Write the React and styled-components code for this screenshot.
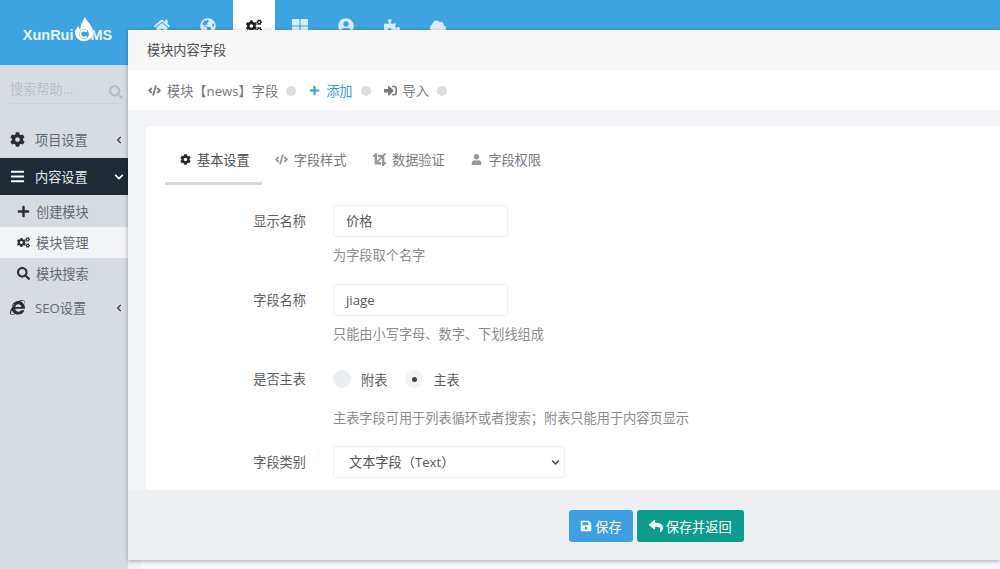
import React from 'react';
import styled, { createGlobalStyle } from 'styled-components';
import {
  FaHome, FaCog, FaCogs, FaBars, FaPlus, FaSearch, FaInternetExplorer, FaChevronLeft, FaChevronDown,
  FaThLarge, FaUserCircle, FaPuzzlePiece, FaCloud, FaCode, FaSignInAlt, FaCrop, FaUser, FaSave, FaReply, FaGlobeAmericas,
} from 'react-icons/fa';

const GlobalStyle = createGlobalStyle`
  html, body { margin: 0; padding: 0; height: 100%; overflow: hidden; }
  body {
    background: #eef1f5;
    font-family: "Open Sans", "Noto Sans CJK SC", sans-serif;
    font-size: 13.2px;
    color: #555;
  }
`;

const Page = styled.div`
  position: relative;
  width: 1000px;
  height: 569px;
  overflow: hidden;
`;

const TopBar = styled.header`
  display: flex;
  height: 65px;
  background: #3ea4e1;
`;

const Brand = styled.div`
  width: 128px;
  height: 65px;
  display: flex;
  align-items: center;
  justify-content: center;
`;

const BrandText = styled.span`
  display: flex;
  align-items: center;
  color: #eaf5fc;
  font-family: "Liberation Sans", sans-serif;
  font-weight: 700;
  font-size: 14.5px;
  margin: 4px 0 0 7px;
`;

const FlameMark = styled.svg`
  width: 20px;
  height: 27px;
  margin: -9px -3px 0 0;
`;

const TopNav = styled.nav`
  display: flex;
  margin-left: 11px;
`;

const TopItem = styled.div`
  width: 42px;
  height: 65px;
  margin: 0 2px;
  display: flex;
  justify-content: center;
  padding-top: 18px;
  box-sizing: border-box;
  font-size: 16px;
  color: ${p => (p.$active ? '#222' : '#d9edf9')};
  background: ${p => (p.$active ? '#fff' : 'transparent')};
`;

const Body = styled.div`
  display: flex;
  height: 504px;
`;

const Sidebar = styled.aside`
  width: 128px;
  background: #d7dce3;
`;

const SearchBox = styled.div`
  display: flex;
  align-items: center;
  justify-content: space-between;
  height: 39px;
  margin: 0 5px 0 10px;
  padding-top: 9px;
  box-sizing: border-box;
  border-bottom: 1px solid #ced3da;
  color: #b9bec6;
`;

const SearchGlyph = styled.span`
  display: flex;
  font-size: 14px;
  margin: 6px 0 0 0;
`;

const MenuList = styled.div`
  margin-top: 17px;
`;

const SubMenu = styled.div`
  padding-top: 1px;
`;

const MenuRow = styled.div`
  display: flex;
  align-items: center;
  height: ${p => (p.$sub ? 31 : 37)}px;
  background: ${p => (p.$dark ? '#1f2a36' : p.$light ? '#f3f4f6' : 'transparent')};
  color: ${p => (p.$dark ? '#e8eaec' : '#62686f')};
`;

const MenuIcon = styled.span`
  width: ${p => (p.$sub ? 36 : 35)}px;
  padding-left: ${p => (p.$sub ? 17 : 10)}px;
  box-sizing: border-box;
  display: flex;
  font-size: ${p => (p.$sub ? 13 : 15)}px;
  color: ${p => (p.$dark ? '#fff' : '#2a2e33')};
`;

const MenuLabel = styled.span`
  flex: 1;
`;

const MenuArrow = styled.span`
  width: ${p => (p.$dark ? 14 : 13)}px;
  display: flex;
  font-size: ${p => (p.$dark ? 10 : 8)}px;
  color: ${p => (p.$dark ? '#fff' : '#333')};
`;

const Backdrop = styled.main`
  flex: 1;
  background: #f8f9fb;
  margin-left: 13px;
`;

const Modal = styled.section`
  position: absolute;
  left: 128px;
  top: 30px;
  right: 0;
  height: 530px;
  background: #eef1f5;
  box-shadow: 0 1px 4px rgba(0, 0, 0, 0.35);
  display: flex;
  flex-direction: column;
`;

const ModalTitle = styled.div`
  height: 40px;
  display: flex;
  align-items: center;
  padding: 0 0 1px 19px;
  box-sizing: border-box;
  background: #f7f7f7;
  color: #4c4f53;
`;

const Breadcrumb = styled.div`
  height: 40px;
  display: flex;
  align-items: center;
  padding: 1px 0 0 20px;
  box-sizing: border-box;
  background: #fff;
  color: #76797d;
`;

const CrumbItem = styled.span`
  display: flex;
  align-items: center;
  gap: 6px;
  color: ${p => (p.$blue ? '#3b9ad8' : 'inherit')};
`;

const CrumbDot = styled.i`
  width: 10px;
  height: 10px;
  border-radius: 50%;
  background: #dcdde0;
  margin: 0 13px 0 8px;
`;

const Content = styled.div`
  flex: 1;
  padding: 16px 0 0 18px;
  background: #f4f5f9;
`;

const Card = styled.div`
  height: 364px;
  background: #fff;
  border-radius: 3px 0 0 3px;
  overflow: hidden;
`;

const Tabs = styled.div`
  display: flex;
  margin-left: 19px;
  height: 59px;
`;

const Tab = styled.div`
  display: flex;
  align-items: center;
  gap: 6px;
  height: 59px;
  box-sizing: border-box;
  padding: 11px ${p => (p.$active ? 12 : 13)}px 0 ${p => (p.$active ? 15 : 13)}px;
  margin-right: ${p => (p.$active ? 0 : 0.5)}px;
  color: ${p => (p.$active ? '#4a4d52' : '#777a7f')};
  border-bottom: 3px solid ${p => (p.$active ? '#d8d8d8' : 'transparent')};
`;

const TabIcon = styled.span`
  display: flex;
  font-size: ${p => p.$size || 11}px;
  color: ${p => (p.$active ? '#26292d' : '#95989c')};
`;

const Form = styled.div`
  padding-top: 20px;
`;

const FormRow = styled.div`
  display: flex;
  align-items: flex-start;
  height: ${p => p.$h}px;
`;

const Label = styled.label`
  width: 187px;
  padding-right: 27px;
  box-sizing: border-box;
  text-align: right;
  color: #5b5e62;
  line-height: 32px;
`;

const Field = styled.div`
  display: flex;
  flex-direction: column;
`;

const TextBox = styled.div`
  width: 175px;
  height: 32px;
  box-sizing: border-box;
  padding: 0 12px;
  line-height: 30px;
  border: 1px solid #eef0f3;
  border-radius: 3px;
  color: #555;
`;

const SelectBox = styled(TextBox)`
  width: 232px;
  display: flex;
  align-items: center;
  justify-content: space-between;
  padding: 0 4px 0 15px;
`;

const Help = styled.div`
  margin-top: ${p => p.$gap || 9}px;
  line-height: 18px;
  color: #888b8f;
`;

const RadioGroup = styled.div`
  display: flex;
  align-items: center;
  height: 32px;
`;

const RadioMark = styled.span`
  width: 18px;
  height: 18px;
  border-radius: 50%;
  background: ${p => (p.$checked ? '#f2f3f4' : '#e9eef3')};
  display: flex;
  align-items: center;
  justify-content: center;
  margin-right: 10px;
  &::after {
    content: '';
    display: ${p => (p.$checked ? 'block' : 'none')};
    width: 5px;
    height: 5px;
    border-radius: 50%;
    background: #444;
  }
`;

const RadioText = styled.span`
  margin-right: 18px;
  color: #5b5e62;
`;

const Footer = styled.div`
  height: 70px;
  display: flex;
  justify-content: center;
  align-items: flex-start;
  gap: 4px;
  padding: 20px 0 0 185px;
  box-sizing: border-box;
  background: #edeff2;
`;

const Btn = styled.button`
  height: 32px;
  display: flex;
  align-items: center;
  gap: 3px;
  padding: 0 ${p => (p.$green ? 12 : 11)}px;
  border: 0;
  border-radius: 3px;
  font: inherit;
  color: #fff;
  background: ${p => (p.$green ? '#0a9c8c' : '#3d9fdf')};
`;

const App = () => (
  <Page>
    <GlobalStyle />
    <TopBar>
      <Brand>
        <BrandText>
          XunRui
          <FlameMark viewBox="0 0 22 30">
            <path d="M12 0c1 4 8 8 9 16a10 10 0 1 1-20 2c0-4 2-6 4-8 0 2 1 3 2 4 0-6 3-9 5-14z" fill="#fff" />
            <circle cx="11" cy="19" r="5.5" fill="#3ea4e1" />
            <path d="M14 16.5a4 4 0 1 0 0 5" fill="none" stroke="#fff" strokeWidth="2" />
          </FlameMark>
          MS
        </BrandText>
      </Brand>
      <TopNav>
        <TopItem><FaHome /></TopItem>
        <TopItem><FaGlobeAmericas /></TopItem>
        <TopItem $active><FaCogs /></TopItem>
        <TopItem><FaThLarge /></TopItem>
        <TopItem><FaUserCircle /></TopItem>
        <TopItem><FaPuzzlePiece /></TopItem>
        <TopItem><FaCloud /></TopItem>
      </TopNav>
    </TopBar>
    <Body>
      <Sidebar>
        <SearchBox>
          搜索帮助...
          <SearchGlyph><FaSearch /></SearchGlyph>
        </SearchBox>
        <MenuList>
          <MenuRow>
            <MenuIcon><FaCog /></MenuIcon>
            <MenuLabel>项目设置</MenuLabel>
            <MenuArrow><FaChevronLeft /></MenuArrow>
          </MenuRow>
          <MenuRow $dark>
            <MenuIcon $dark><FaBars /></MenuIcon>
            <MenuLabel>内容设置</MenuLabel>
            <MenuArrow $dark><FaChevronDown /></MenuArrow>
          </MenuRow>
          <SubMenu>
            <MenuRow $sub>
              <MenuIcon $sub><FaPlus /></MenuIcon>
              <MenuLabel>创建模块</MenuLabel>
            </MenuRow>
            <MenuRow $sub $light>
              <MenuIcon $sub><FaCogs /></MenuIcon>
              <MenuLabel>模块管理</MenuLabel>
            </MenuRow>
            <MenuRow $sub>
              <MenuIcon $sub><FaSearch /></MenuIcon>
              <MenuLabel>模块搜索</MenuLabel>
            </MenuRow>
          </SubMenu>
          <MenuRow>
            <MenuIcon><FaInternetExplorer /></MenuIcon>
            <MenuLabel>SEO设置</MenuLabel>
            <MenuArrow><FaChevronLeft /></MenuArrow>
          </MenuRow>
        </MenuList>
      </Sidebar>
      <Backdrop />
    </Body>
    <Modal>
      <ModalTitle>模块内容字段</ModalTitle>
      <Breadcrumb>
        <CrumbItem><FaCode size={13} /> 模块【news】字段</CrumbItem>
        <CrumbDot />
        <CrumbItem $blue><FaPlus size={11} /> 添加</CrumbItem>
        <CrumbDot />
        <CrumbItem><FaSignInAlt size={13} /> 导入</CrumbItem>
        <CrumbDot />
      </Breadcrumb>
      <Content>
        <Card>
          <Tabs>
            <Tab $active><TabIcon $active><FaCog /></TabIcon>基本设置</Tab>
            <Tab><TabIcon $size={13}><FaCode /></TabIcon>字段样式</Tab>
            <Tab><TabIcon $size={13}><FaCrop /></TabIcon>数据验证</Tab>
            <Tab><TabIcon><FaUser /></TabIcon>字段权限</Tab>
          </Tabs>
          <Form>
            <FormRow $h={79}>
              <Label>显示名称</Label>
              <Field>
                <TextBox>价格</TextBox>
                <Help>为字段取个名字</Help>
              </Field>
            </FormRow>
            <FormRow $h={79}>
              <Label>字段名称</Label>
              <Field>
                <TextBox>jiage</TextBox>
                <Help>只能由小写字母、数字、下划线组成</Help>
              </Field>
            </FormRow>
            <FormRow $h={83}>
              <Label>是否主表</Label>
              <Field>
                <RadioGroup>
                  <RadioMark />
                  <RadioText>附表</RadioText>
                  <RadioMark $checked />
                  <RadioText>主表</RadioText>
                </RadioGroup>
                <Help $gap={14}>主表字段可用于列表循环或者搜索；附表只能用于内容页显示</Help>
              </Field>
            </FormRow>
            <FormRow $h={32}>
              <Label>字段类别</Label>
              <Field>
                <SelectBox>
                  文本字段（Text）
                  <FaChevronDown size={9} color="#444" />
                </SelectBox>
              </Field>
            </FormRow>
          </Form>
        </Card>
      </Content>
      <Footer>
        <Btn><FaSave size={12} />保存</Btn>
        <Btn $green><FaReply size={14} />保存并返回</Btn>
      </Footer>
    </Modal>
  </Page>
);

export default App;
